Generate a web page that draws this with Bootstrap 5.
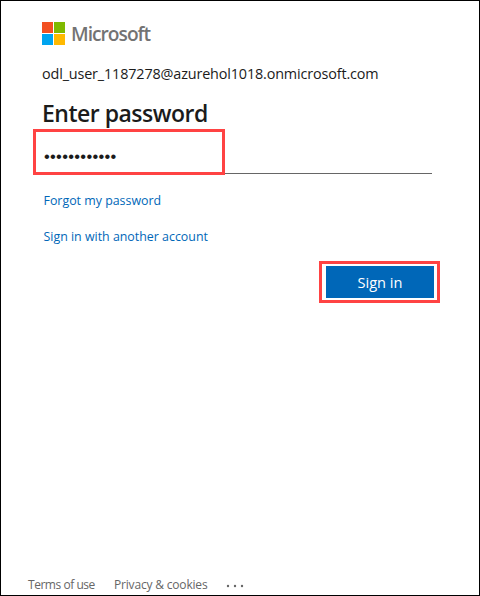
<!DOCTYPE html>
<html lang="en">
<head>
<meta charset="utf-8">
<meta name="viewport" content="width=device-width, initial-scale=1">
<title>Sign in</title>
<link href="https://cdn.jsdelivr.net/npm/bootstrap@5.3.0/dist/css/bootstrap.min.css" rel="stylesheet">
<style>
body{font-family:"Open Sans","Noto Sans",sans-serif;color:#1b1b1b;font-size:15px}
.page{width:480px;height:596px;border:1px solid #000;overflow:hidden}
.login{padding:21px 47px 0 41px}
.brand-row{height:23px;gap:6px}
.brand-name{font-weight:600;font-size:19.2px;line-height:23px;color:#737373;letter-spacing:-1px}
.identity{height:24px;line-height:24px;margin-top:17px;font-size:14.4px;letter-spacing:-.15px}
.heading{font-size:23px;font-weight:600;line-height:30px;margin:12px 0 2px;letter-spacing:-.5px}
.field{height:44px}
.pw{height:44px;border:0;border-bottom:1px solid #666;font-family:"Liberation Sans",sans-serif;font-size:16.5px;padding:9px 0 0 2px;color:#1b1b1b;letter-spacing:.28px}
.pw:focus{box-shadow:none}
.mark-box{border:3px solid #ff4343;pointer-events:none}
.mark-field{left:-9px;top:-1px;width:192px;height:46px}
.mark-button{left:-7px;top:-5px;width:121px;height:42px}
.links{padding-left:1.5px;margin-top:17px;gap:16px;font-size:12.4px;line-height:20px}
.links a{color:#0067b8}
.submit{margin:19px -2px 0 0}
.btn-sign{width:108px;height:32px;background:#0067b8;color:#fff;font-size:14.6px;line-height:20px;padding:0}
.foot{padding:0 0 0 27px;height:20px;font-size:12px;line-height:20px}
.foot a{color:#666}
.terms{width:86px;letter-spacing:-.46px}.privacy{width:112px;letter-spacing:-.18px}
.dots{margin-top:2px}
</style>
</head>
<body class="bg-white">
<div class="page d-flex flex-column justify-content-between">
  <main class="login">
    <div class="brand-row d-flex align-items-center">
      <svg width="23" height="23" viewBox="0 0 23 23" aria-hidden="true"><path fill="#f25022" d="M0 0h11v11H0z"/><path fill="#7fba00" d="M12 0h11v11H12z"/><path fill="#00a4ef" d="M0 12h11v11H0z"/><path fill="#ffb900" d="M12 12h11v11H12z"/></svg>
      <span class="brand-name">Microsoft</span>
    </div>
    <div class="identity text-nowrap">odl_user_1187278@azurehol1018.onmicrosoft.com</div>
    <h1 class="heading">Enter password</h1>
    <div class="field position-relative">
      <input class="pw form-control rounded-0 bg-transparent" type="password" value="abcdefghijkl" aria-label="Password">
      <div class="mark-box mark-field position-absolute"></div>
    </div>
    <div class="links d-flex flex-column align-items-start">
      <a class="text-decoration-none" href="#">Forgot my password</a>
      <a class="text-decoration-none" href="#">Sign in with another account</a>
    </div>
    <div class="submit d-flex justify-content-end">
      <div class="position-relative">
        <button class="btn btn-sign rounded-0 border-0 d-block" type="button">Sign in</button>
        <div class="mark-box mark-button position-absolute"></div>
      </div>
    </div>
  </main>
  <footer class="foot d-flex align-items-center">
    <a class="terms text-decoration-none text-nowrap" href="#">Terms of use</a>
    <a class="privacy text-decoration-none text-nowrap" href="#">Privacy &amp; cookies</a>
    <svg class="dots" width="18" height="4" viewBox="0 0 18 4" fill="#666" aria-hidden="true"><circle cx="2" cy="2" r="1.2"/><circle cx="9" cy="2" r="1.2"/><circle cx="16" cy="2" r="1.2"/></svg>
  </footer>
</div>
<script src="https://cdn.jsdelivr.net/npm/bootstrap@5.3.0/dist/js/bootstrap.bundle.min.js"></script>
</body>
</html>
